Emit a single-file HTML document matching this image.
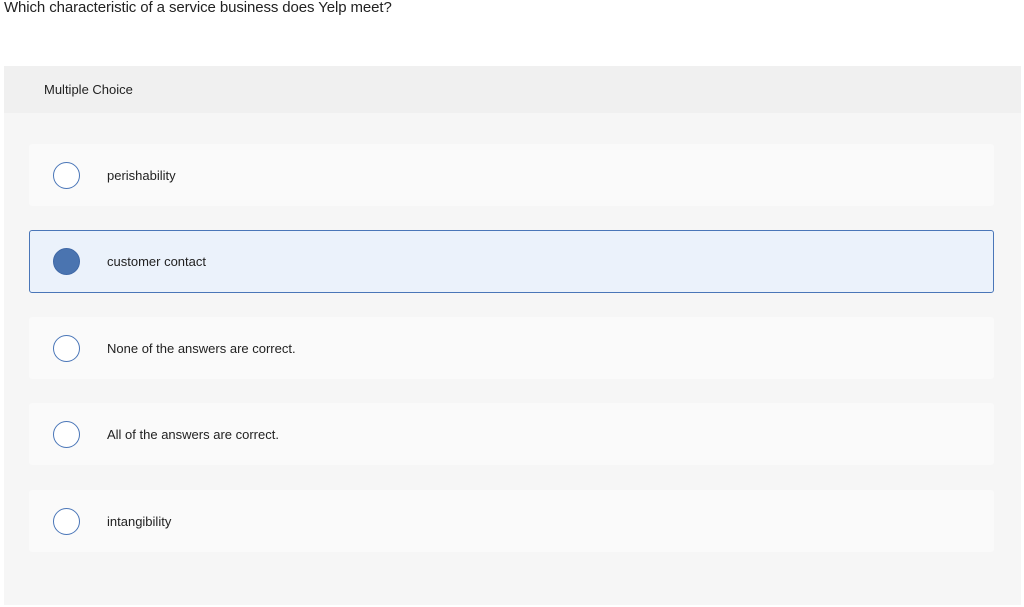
<!DOCTYPE html>
<html><head><style>
body{margin:0;width:1024px;height:607px;background:#fff;font-family:"Liberation Sans",sans-serif;position:relative;overflow:hidden;color:#222}
.q{position:absolute;left:4px;top:-1px;font-size:15px;color:#222;letter-spacing:-0.1px}
.panel{position:absolute;left:4px;top:66px;width:1017px;height:539px;background:#f6f6f6}
.hdr{position:absolute;left:0;top:0;width:1017px;height:47px;background:#f0f0f0}
.hdr span{position:absolute;left:40px;top:16px;font-size:13px;color:#222}
.opt{position:absolute;left:25px;width:965px;height:62px;background:#fafafa;border-radius:3px}
.opt .c{position:absolute;left:24px;top:18px;width:27px;height:27px;border:1px solid #4a76b8;border-radius:50%;box-sizing:border-box;background:#fff}
.opt .t{position:absolute;left:78px;top:24px;font-size:13px;color:#222}
.sel{background:#ebf2fb;border:1px solid #4a76b8;box-sizing:border-box;height:63px}
.sel .c{background:#4a74b0;border-color:#3f68a6;left:23px;top:17px;width:27px;height:27px}
.sel .t{left:77px;top:23px}
</style></head><body>
<div class="q">Which characteristic of a service business does Yelp meet?</div>
<div class="panel">
<div class="hdr"><span>Multiple Choice</span></div>
<div class="opt" style="top:78px"><div class="c"></div><div class="t">perishability</div></div>
<div class="opt sel" style="top:164px"><div class="c"></div><div class="t">customer contact</div></div>
<div class="opt" style="top:251px"><div class="c"></div><div class="t">None of the answers are correct.</div></div>
<div class="opt" style="top:337px"><div class="c"></div><div class="t">All of the answers are correct.</div></div>
<div class="opt" style="top:424px"><div class="c"></div><div class="t">intangibility</div></div>
</div>
</body></html>
